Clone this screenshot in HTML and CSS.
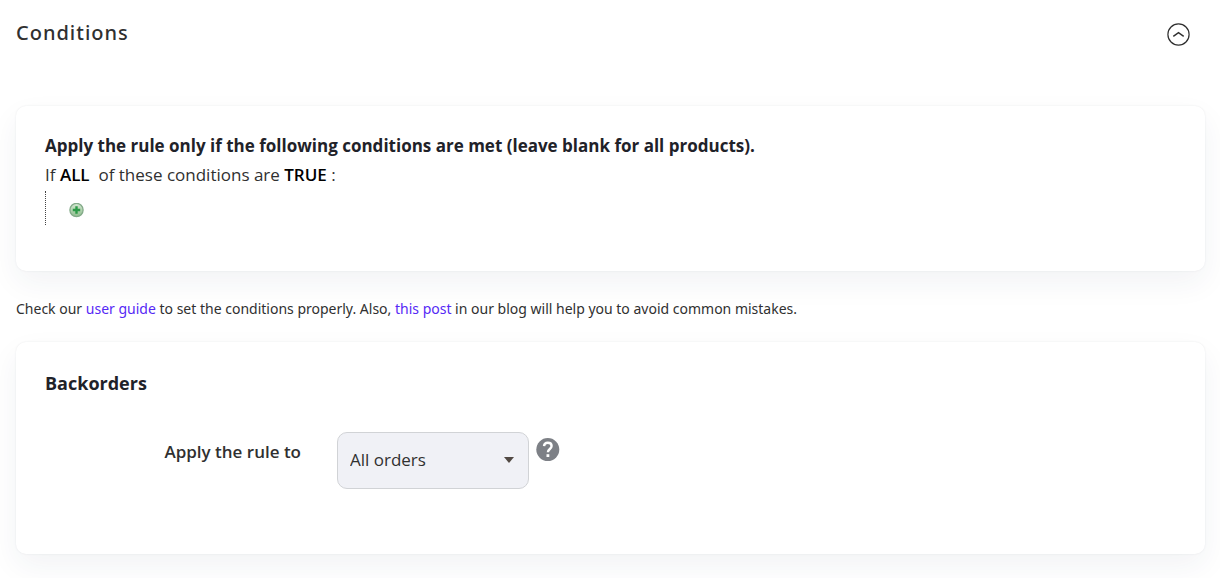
FILE: index.html
```
<!DOCTYPE html>
<html lang="en">
<head>
  <meta charset="UTF-8">
  <meta name="viewport" content="width=device-width, initial-scale=1.0">
  <title>Conditions</title>
  <link rel="stylesheet" href="styles.css">
</head>
<body>
  <header class="section-header">
    <h1 class="section-title">Conditions</h1>
    <button type="button" class="icon-button" aria-label="Collapse section">
      <svg width="24" height="24" viewBox="0 0 24 24" fill="none" stroke="#303030">
        <circle cx="12.5" cy="12.5" r="10.6" stroke-width="1.2"/>
        <path d="M7.3 14.4 12.5 10.6l5.2 3.8" stroke-width="1.4"/>
      </svg>
    </button>
  </header>

  <main>
    <!-- Rule conditions -->
    <section class="card conditions-card">
      <h2 class="card-title card-title-long">Apply the rule only if the following conditions are met (leave blank for all products).</h2>
      <p class="rule-line">If <a class="rule-param" href="#">ALL</a>&nbsp; of these conditions are <a class="rule-param" href="#">TRUE</a> :</p>
      <div class="rule-children">
        <button type="button" class="icon-button" aria-label="Add condition">
          <svg width="15" height="15" viewBox="0 0 15 15">
            <defs>
              <linearGradient id="add-fill" x1="0" y1="0" x2="0" y2="1">
                <stop offset="0" stop-color="#d5e8d3"/>
                <stop offset="1" stop-color="#8fbd8d"/>
              </linearGradient>
            </defs>
            <circle cx="7.5" cy="7" r="6.6" fill="url(#add-fill)" stroke="#83aa89" stroke-width="1.3"/>
            <path d="M7.5 3.3v7.4M3.8 7h7.4" stroke="#2c9a47" stroke-width="2.4"/>
          </svg>
        </button>
      </div>
    </section>

    <p class="note">Check our <a href="#">user guide</a> to set the conditions properly. Also, <a href="#">this post</a> in our blog will help you to avoid common mistakes.</p>

    <!-- Backorders -->
    <section class="card backorders-card">
      <h2 class="card-title">Backorders</h2>
      <div class="field">
        <label class="field-label" for="apply-to">Apply the rule to</label>
        <select class="field-select" id="apply-to" name="apply-to">
          <option>All orders</option>
        </select>
        <button type="button" class="icon-button help-button" aria-label="Help">
          <svg width="24" height="24" viewBox="0 0 24 24" fill="none">
            <circle cx="11.8" cy="11.6" r="11.5" fill="#7d8086"/>
            <path d="M8 8.2C8.2 5.8 9.8 4.8 11.8 4.8c2.3 0 3.8 1.2 3.8 3.2 0 3-3.7 3-3.7 6.3" stroke="#fff" stroke-width="2.4"/>
            <path d="M10.5 16.2h2.8v2.8h-2.8z" fill="#fff"/>
          </svg>
        </button>
      </div>
    </section>
  </main>
</body>
</html>
```
FILE: styles.css
```
* {
  box-sizing: border-box;
}
body {
  margin: 0;
  padding: 20px 15px 24px 16px;
  font-family: "Open Sans", "Noto Sans", sans-serif;
  font-size: 14px;
  line-height: 24px;
  color: #303030;
  background-color: #fff;
}
h1, h2, p {
  margin: 0;
}
a {
  color: #5629f5;
  text-decoration: none;
}
.section-header {
  display: flex;
  justify-content: space-between;
  align-items: flex-start;
  padding-right: 15px;
  margin-bottom: 60px;
}
.section-title {
  font-family: "Noto Sans", sans-serif;
  font-size: 20px;
  font-weight: 500;
  line-height: 26px;
  letter-spacing: 1px;
}
.icon-button {
  display: flex;
  padding: 0;
  border: none;
  background: none;
  cursor: pointer;
}
.section-header .icon-button {
  margin-top: 2px;
}
.card {
  padding: 28px 29px;
  border-radius: 10px;
  background-color: #fff;
  box-shadow: 0 0 2px rgba(30, 40, 60, 0.09), 0 12px 30px rgba(30, 50, 90, 0.06);
}
.card-title {
  font-size: 18px;
  font-weight: 700;
  line-height: 26px;
  color: #1f2229;
}
.card-title-long {
  font-size: 17px;
  line-height: 24px;
}
.conditions-card {
  padding-bottom: 46px;
}
.rule-line {
  margin-top: 4px;
  font-size: 17px;
  line-height: 26px;
}
.rule-param {
  font-weight: 600;
  color: #000;
}
.rule-children {
  margin-top: 3px;
  padding: 12px 0 7px 23px;
  border-left: 1px dotted #444;
}
.note {
  margin: 26px 0 21px;
  font-family: "Noto Sans", sans-serif;
}
.backorders-card {
  padding-bottom: 65px;
}
.field {
  display: flex;
  align-items: flex-start;
  margin-top: 36px;
}
.field-label {
  width: 256px;
  margin-right: 36px;
  padding-top: 8px;
  font-size: 17px;
  font-weight: 600;
  text-align: right;
}
.field-select {
  width: 192px;
  height: 57px;
  padding: 0 12px 2px;
  border: 1px solid #d1d3d6;
  border-radius: 10px;
  appearance: none;
  font-family: inherit;
  font-size: 17px;
  color: #303030;
  background: #f0f1f6 url("data:image/svg+xml,%3Csvg xmlns='http://www.w3.org/2000/svg' width='10' height='6'%3E%3Cpath d='M0 0h10L5 6z' fill='%23514943'/%3E%3C/svg%3E") no-repeat right 14px top 24px;
}
.help-button {
  margin: 6px 0 0 7px;
}
```
